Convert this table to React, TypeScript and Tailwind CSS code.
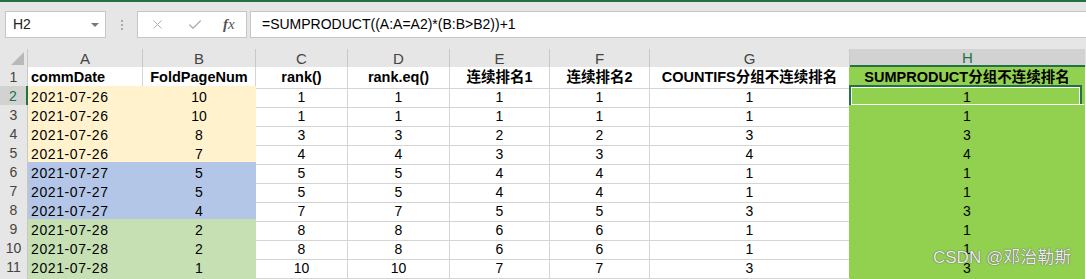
import { X, Check } from 'lucide-react';

const cols = ['A', 'B', 'C', 'D', 'E', 'F', 'G', 'H'];

const kopf = ['commDate', 'FoldPageNum', 'rank()', 'rank.eq()', '连续排名1', '连续排名2', 'COUNTIFS分组不连续排名', 'SUMPRODUCT分组不连续排名'];

const zeilen: (string | number)[][] = [
  ['2021-07-26', 10, 1, 1, 1, 1, 1, 1],
  ['2021-07-26', 10, 1, 1, 1, 1, 1, 1],
  ['2021-07-26', 8, 3, 3, 2, 2, 3, 3],
  ['2021-07-26', 7, 4, 4, 3, 3, 4, 4],
  ['2021-07-27', 5, 5, 5, 4, 4, 1, 1],
  ['2021-07-27', 5, 5, 5, 4, 4, 1, 1],
  ['2021-07-27', 4, 7, 7, 5, 5, 3, 3],
  ['2021-07-28', 2, 8, 8, 6, 6, 1, 1],
  ['2021-07-28', 2, 8, 8, 6, 6, 1, 1],
  ['2021-07-28', 1, 10, 10, 7, 7, 3, 3],
];

// fill of A/B per data row
const gruppe = (i: number) => {
  if (i < 4) return 'bg-[#fff2cc] border-[#fff2cc]';
  if (i < 7) return 'bg-[#b4c6e7] border-[#b4c6e7]';
  return 'bg-[#c6e0b4] border-[#c6e0b4]';
};

const grid = 'grid grid-cols-[28px_115px_113px_92px_102px_100px_100px_200px_235px]';

export default function App() {
  return (
    <div
      className="relative h-[279px] w-[1086px] overflow-hidden bg-[#e6e6e6] text-[14px] text-black"
      style={{ fontFamily: '"Liberation Sans", "Noto Sans CJK SC", sans-serif' }}
    >
      {/* Formelleiste */}
      <div className="h-[49px] border-t-2 border-[#217346] pt-[9px]">
        <div className="flex h-[27px] items-stretch">
          <div className="ml-[5px] flex w-[101px] items-center justify-between border border-[#c6c6c6] bg-white pl-[7px] pr-[6px] text-[14px] text-[#222]">
            <span>H2</span>
            <span className="h-0 w-0 border-x-[4px] border-t-[4px] border-x-transparent border-t-[#777]" />
          </div>
          <div className="flex w-[31px] flex-col items-center justify-center gap-[2px]">
            <span className="h-[2px] w-[2px] bg-[#aaa]" />
            <span className="h-[2px] w-[2px] bg-[#aaa]" />
            <span className="h-[2px] w-[2px] bg-[#aaa]" />
          </div>
          <div className="flex w-[110px] items-center border border-[#c6c6c6] bg-white pl-[12px]">
            <X className="h-[15px] w-[15px] text-[#b0b0b0]" strokeWidth={1.6} />
            <Check className="ml-[22px] h-[16px] w-[16px] text-[#b0b0b0]" strokeWidth={2} />
            <span
              className="ml-[20px] text-[15px] italic text-[#555]"
              style={{ fontFamily: '"Liberation Serif", serif' }}
            >
              <b className="font-bold">f</b>x
            </span>
          </div>
          <div className="ml-[3px] flex flex-1 items-center border border-r-0 border-[#c6c6c6] bg-white pl-[11px] text-[14px]">
            =SUMPRODUCT((A:A=A2)*(B:B&gt;B2))+1
          </div>
        </div>
      </div>

      {/* Spaltenköpfe */}
      <div className={`${grid} h-[18px] text-[15px] text-[#444]`}>
        <div className="relative border-r border-[#c8c8c8]">
          <span className="absolute bottom-[2px] right-[3px] h-0 w-0 border-b-[13px] border-l-[13px] border-b-[#b8b8b8] border-l-transparent" />
        </div>
        {cols.map((c) =>
          c === 'H' ? (
            <div key={c} className="flex items-center justify-center border-b-2 border-[#217346] bg-[#d2d2d2] leading-none text-[#217346]">
              {c}
            </div>
          ) : (
            <div key={c} className="flex items-center justify-center border-r border-[#c8c8c8] leading-none">
              {c}
            </div>
          )
        )}
      </div>

      {/* Zeile 1 */}
      <div className={`${grid} h-[19px] bg-white`}>
        <div className="flex items-center justify-center border-b border-r border-[#c8c8c8] bg-[#e6e6e6] text-[#444]">1</div>
        {kopf.map((t, j) => (
          <div
            key={t}
            className={`flex items-center whitespace-nowrap border-b border-r text-[14.5px] font-bold leading-none ${
              j === 0 ? 'pl-[3px]' : 'justify-center'
            } ${j === 7 ? 'border-[#92d050] bg-[#92d050]' : j === 6 ? 'border-b-[#d4d4d4] border-r-[#92d050]' : 'border-[#d4d4d4]'}`}
          >
            {t}
          </div>
        ))}
      </div>

      {/* Daten */}
      {zeilen.map((z, i) => (
        <div key={i} className={`${grid} h-[19px] bg-white`}>
          <div
            className={`flex items-center justify-center border-b border-[#c8c8c8] ${
              i === 0 ? 'border-r-2 border-r-[#217346] bg-[#d2d2d2] text-[#217346]' : 'border-r bg-[#e6e6e6] text-[#444]'
            }`}
          >
            {i + 2}
          </div>
          {z.map((v, j) => {
            let farbe = 'border-[#d4d4d4]';
            if (j < 2) farbe = gruppe(i);
            if (j === 6) farbe = 'border-b-[#d4d4d4] border-r-[#92d050]';
            if (j === 7) farbe = 'bg-[#92d050] border-[#92d050]';
            return (
              <div
                key={j}
                className={`relative flex items-center border-b border-r leading-none ${farbe} ${
                  j === 0 ? 'pl-[3px] tracking-[0.6px]' : 'justify-center'
                }`}
              >
                {v}
                {i === 0 && j === 7 && (
                  <>
                    <span className="absolute -left-px -top-px bottom-0 right-[2px] border-2 border-[#217346]">
                      <span className="absolute inset-0 border border-white" />
                    </span>
                    <span className="absolute -bottom-[4px] right-0 h-[7px] w-[7px] border border-white bg-[#217346]" />
                  </>
                )}
              </div>
            );
          })}
        </div>
      ))}

      {/* Zeile 12, angeschnitten */}
      <div className={`${grid} h-[19px] bg-white`}>
        <div className="border-r border-[#c8c8c8] bg-[#e6e6e6]" />
        {cols.map((c) => (
          <div key={c} className="border-r border-[#d4d4d4]" />
        ))}
      </div>

      <div
        className="absolute left-[933px] top-[249px] whitespace-nowrap text-[17px] leading-none text-[#ececec]"
        style={{ textShadow: '0 0 1px #555, 0 0 1px #555' }}
      >
        CSDN @邓治勒斯
      </div>
    </div>
  );
}
